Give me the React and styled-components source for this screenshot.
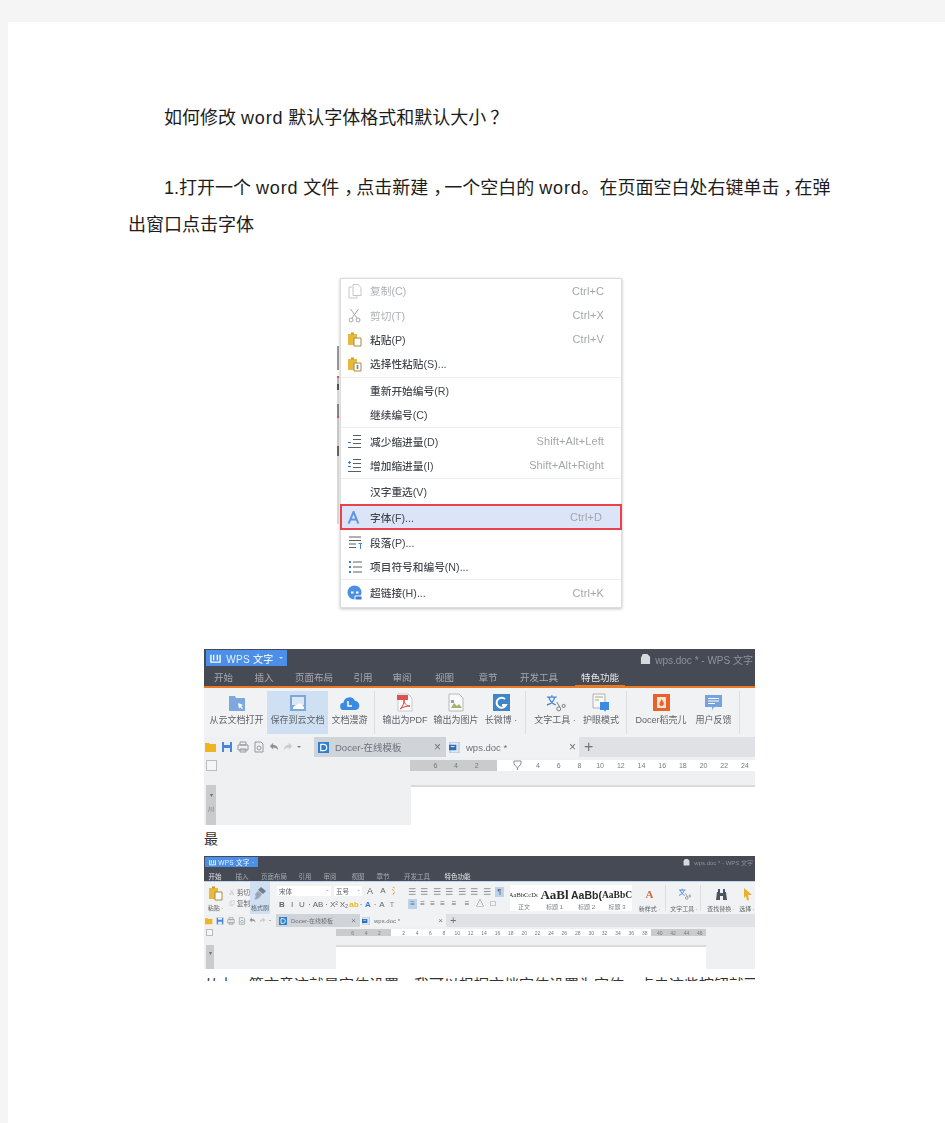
import React from "react";
import styled, { createGlobalStyle } from "styled-components";

const CJK = `"Liberation Sans", "Noto Sans CJK SC", sans-serif`;

const Global = createGlobalStyle`
  html, body { margin: 0; padding: 0; background: #f5f5f5; }
  * { box-sizing: border-box; }
`;

const Page = styled.main`
  margin: 22px 0 0 8px;
  min-height: 1101px;
  padding-top: 78px;
  background: #fff;
  color: #1c1c1c;
  font-family: ${CJK};
  overflow: hidden;
`;
const Para = styled.p`
  margin: 0 105px ${(p) => p.$after}px 120px;
  font-size: 18px;
  line-height: 37px;
  text-indent: 36px;
`;
const Latin = styled.span`
  letter-spacing: 0.8px;
`;
const Punct = styled.span`
  display: inline-block;
  text-indent: 0;
  width: ${(p) => p.$w || 16}px;
  padding-left: ${(p) => p.$shift ?? 5}px;
  white-space: nowrap;
`;

/* ---------- context menu ---------- */
const MenuWrap = styled.div`
  position: relative;
  width: 282px;
  margin: 0 0 41px 332px;
`;
const Menu = styled.div`
  padding-bottom: 2px;
  background: #fff;
  border: 1px solid #dcdcdc;
  box-shadow: 0 1px 3px rgba(0, 0, 0, 0.25);
  filter: blur(0.55px);
  font-size: 10.7px;
`;
const Row = styled.div`
  display: flex;
  align-items: center;
  height: 24.4px;
  padding: 0 17px 0 5px;
  color: ${(p) => (p.$off ? "#aeb0b2" : "#44484e")};
  font-weight: ${(p) => (p.$off ? 400 : 500)};
`;
const HotRow = styled(Row)`
  height: 26px;
  margin: 0 -1px;
  padding: 0 18px 0 4px;
  border: 2px solid #e8434c;
  background: #dce5f8;
`;
const RowIcon = styled.span`
  width: 24px;
  height: 17px;
  padding-left: 1px;
  display: flex;
  align-items: center;
  justify-content: flex-start;
`;
const RowLabel = styled.span`
  flex: 1;
  white-space: nowrap;
`;
const Keys = styled.span`
  color: #a4a6a9;
  font-size: 11px;
  font-weight: 400;
  letter-spacing: 0.1px;
`;
const Rule = styled.div`
  height: 1px;
  margin: 0.5px 0;
  background: #eeeeee;
`;
const Sliver = styled.div`
  position: absolute;
  left: -3px;
  top: 68px;
  width: 2px;
  height: 178px;
  filter: blur(0.6px);
  background: linear-gradient(#999 0 24px, #fff 24px 30px, #d55 30px 32px, #bbb 32px 38px, #555 38px 44px, #ddd 44px 58px, #888 58px 70px, #d55 70px 72px, #ccc 72px 100px, #666 100px 110px, #ddd 110px);
`;

const Ico = ({ children, w = 16, h = 16, box = "0 0 16 16" }) => (
  <svg width={w} height={h} viewBox={box} fill="none">{children}</svg>
);
const CopyIco = () => (
  <Ico><path d="M5 4H2v11h8v-2" stroke="#c4c6c8" /><path d="M6 1.500h5l3 3v8H6z" stroke="#c4c6c8" /></Ico>
);
const CutIco = () => (
  <Ico><circle cx="4" cy="13" r="2" stroke="#a5a7a9" /><circle cx="11" cy="13" r="2" stroke="#a5a7a9" /><path d="M3.500 2l6.500 9M11.500 2L5 11" stroke="#a5a7a9" /></Ico>
);
const PasteIco = ({ blue }) => (
  <Ico>
    <path d="M1 3h9v11H1z" fill="#e9b93c" />
    <path d="M4 1.500h3v2H4z" fill="#c99a2c" />
    <path d="M7 7h7v8H7z" fill="#fff" stroke="#a88a3e" />
    {blue && <path d="M10.500 9v4" stroke="#4a86d8" strokeWidth="1.600" />}
  </Ico>
);
const LinesIco = ({ arrow }) => (
  <Ico>
    <path d="M6 2.500h8M6 6.500h8M6 10.500h8M1 14.500h13" stroke="#5b6068" />
    <path d="M1 5.500h3M2.500 4v3" stroke={arrow ? "#3c78d8" : "#fff"} />
    <path d="M1 9.500h3" stroke="#3c78d8" />
  </Ico>
);
const AIco = () => (
  <Ico w={13} h={13}><path d="M2 15.500L8 1l6 14.500M4.500 10.500h7" stroke="#5f95e6" strokeWidth="2.400" /></Ico>
);
const ParaIco = () => (
  <Ico><path d="M2 3h12M2 6.500h12M2 10h7M2 13.500h7" stroke="#5b6068" /><path d="M11 9h4v1h-1v5h-1v-5h-1z" fill="#4a86d8" /></Ico>
);
const ListIco = () => (
  <Ico><path d="M6 3h9M6 8h9M6 13h9" stroke="#5b6068" /><path d="M2 2h2v2H2zM2 7h2v2H2zM2 12h2v2H2z" fill="#3c78d8" /></Ico>
);
const GlobeIco = () => (
  <Ico>
    <circle cx="7.500" cy="7.500" r="7" fill="#4d8fe0" />
    <path d="M4 6.500h2.500v2H4zM9 6.500h2.500v2H9z" fill="#fff" />
    <path d="M8 11h7v4H8z" fill="#3c78d8" stroke="#fff" />
  </Ico>
);

const menuRows = [
  { icon: <CopyIco />, label: "复制(C)", keys: "Ctrl+C", off: true },
  { icon: <CutIco />, label: "剪切(T)", keys: "Ctrl+X", off: true },
  { icon: <PasteIco />, label: "粘贴(P)", keys: "Ctrl+V" },
  { icon: <PasteIco blue />, label: "选择性粘贴(S)..." },
  "rule",
  { label: "重新开始编号(R)" },
  { label: "继续编号(C)" },
  "rule",
  { icon: <LinesIco />, label: "减少缩进量(D)", keys: "Shift+Alt+Left" },
  { icon: <LinesIco arrow />, label: "增加缩进量(I)", keys: "Shift+Alt+Right" },
  "rule",
  { label: "汉字重选(V)" },
  { hot: true, icon: <AIco />, label: "字体(F)...", keys: "Ctrl+D" },
  { icon: <ParaIco />, label: "段落(P)..." },
  { icon: <ListIco />, label: "项目符号和编号(N)..." },
  "rule",
  { icon: <GlobeIco />, label: "超链接(H)...", keys: "Ctrl+K" },
];

/* ---------- WPS screenshots shared ---------- */
const Column = styled.div`
  width: 551px;
  margin: 0 0 0 196px;
`;
const Shot = styled.div`
  height: ${(p) => p.$h}px;
  overflow: hidden;
  background: #eef0f1;
  filter: blur(${(p) => p.$blur}px);
`;
const TitleBar = styled.div`
  display: flex;
  align-items: flex-start;
  justify-content: space-between;
  height: ${(p) => p.$h}px;
  padding: 1px 2px 0 ${(p) => p.$pad}px;
  background: #454a54;
`;
const AppBtn = styled.div`
  display: flex;
  align-items: center;
  justify-content: space-between;
  width: ${(p) => p.$w}px;
  height: ${(p) => p.$h}px;
  padding: 0 4px;
  background: #4b8fe8;
  color: #e8f0fb;
  font-size: ${(p) => p.$fs}px;
  font-weight: 500;
  letter-spacing: 0.3px;
  white-space: nowrap;
`;
const DocTitle = styled.div`
  display: flex;
  align-items: center;
  gap: 4px;
  color: #8f939b;
  font-size: ${(p) => p.$fs}px;
  margin-top: ${(p) => p.$top}px;
`;
const TabBar = styled.div`
  display: flex;
  align-items: center;
  height: ${(p) => p.$h}px;
  background: #454a54;
  border-bottom: ${(p) => p.$line};
`;
const MenuTab = styled.div`
  width: ${(p) => p.$w}px;
  height: 100%;
  margin-left: ${(p) => p.$ml || 0}px;
  flex: none;
  display: flex;
  align-items: center;
  justify-content: center;
  color: ${(p) => (p.$on ? "#e6e8ea" : "#a6a9af")};
  font-size: ${(p) => p.$fs}px;
  white-space: nowrap;
  border-bottom: ${(p) => (p.$mark ? "1px solid #ea7a22" : "none")};
`;
const Flag = styled.span`
  width: 2px;
  height: 8px;
  margin-right: 1px;
  background: #ea7a22;
`;
const Ribbon = styled.div`
  display: flex;
  align-items: stretch;
  height: ${(p) => p.$h}px;
  padding: ${(p) => p.$pad};
  background: #f1f2f3;
`;
const RibBtn = styled.div`
  width: ${(p) => p.$w}px;
  margin-left: ${(p) => p.$ml || 0}px;
  flex: none;
  display: flex;
  flex-direction: column;
  align-items: center;
  padding-top: ${(p) => p.$top ?? 3}px;
  background: ${(p) => (p.$on ? "#cfe0f3" : "transparent")};
  color: #5f6369;
  font-size: ${(p) => p.$fs}px;
  line-height: ${(p) => p.$fs + 4}px;
  white-space: nowrap;
`;
const RibIcon = styled.div`
  height: ${(p) => p.$h}px;
  flex: none;
  margin-bottom: ${(p) => p.$gap}px;
  display: flex;
  align-items: center;
`;
const RibSep = styled.div`
  width: 1px;
  flex: none;
  margin: ${(p) => p.$m};
  background: #dcdee0;
`;
const Strip = styled.div`
  display: flex;
  align-items: center;
  height: ${(p) => p.$h}px;
  background: #dfe1e4;
`;
const Quick = styled.div`
  display: flex;
  align-items: center;
  gap: ${(p) => p.$gap}px;
  width: ${(p) => p.$w}px;
  height: 100%;
  padding-left: 1px;
  background: #eef0f1;
`;
const DocTab = styled.div`
  display: flex;
  align-items: center;
  gap: ${(p) => p.$gap}px;
  width: ${(p) => p.$w}px;
  height: 100%;
  padding: 0 ${(p) => p.$r}px 0 ${(p) => p.$l}px;
  background: ${(p) => (p.$on ? "#f1f2f3" : "#d0d3d8")};
  color: #6d7178;
  font-size: ${(p) => p.$fs}px;
  white-space: nowrap;
`;
const TabText = styled.span`
  flex: 1;
`;
const Close = styled.span`
  color: #70747a;
  font-size: ${(p) => p.$fs}px;
`;
const Plus = styled.span`
  margin-left: ${(p) => p.$l}px;
  color: #70747a;
  font-size: ${(p) => p.$fs}px;
  font-weight: 300;
  line-height: 1;
`;

/* rulers and workspace */
const RulerRow = styled.div`
  display: flex;
  align-items: flex-start;
  height: ${(p) => p.$h}px;
  padding-top: ${(p) => p.$top}px;
`;
const CornerBox = styled.div`
  width: ${(p) => p.$s}px;
  height: ${(p) => p.$s}px;
  flex: none;
  margin-left: 2px;
  margin-right: ${(p) => p.$r}px;
  background: #f4f5f5;
  border: 1px solid #b9bcc0;
`;
const RulerPart = styled.div`
  display: flex;
  align-items: center;
  flex: none;
  width: ${(p) => p.$w}px;
  height: ${(p) => p.$h}px;
  padding-left: ${(p) => p.$pad || 0}px;
  background: ${(p) => (p.$white ? "#fff" : "#c9cbcd")};
`;
const Tick = styled.span`
  width: ${(p) => p.$w}px;
  flex: none;
  text-align: center;
  color: #777a7e;
  font-size: ${(p) => p.$fs}px;
`;
const Work = styled.div`
  display: flex;
  align-items: flex-start;
  justify-content: space-between;
`;
const VRuler = styled.div`
  display: flex;
  flex-direction: column;
  align-items: center;
  gap: 6px;
  width: ${(p) => p.$w}px;
  height: ${(p) => p.$h}px;
  margin-left: 2px;
  padding-top: ${(p) => p.$top}px;
  background: #c9cbcd;
  color: #6d7075;
  font-size: 6px;
`;
const Sheet = styled.div`
  width: ${(p) => p.$w}px;
  height: ${(p) => p.$h}px;
  margin-right: ${(p) => p.$r || 0}px;
  background: #fff;
  border-top: 2px solid #d8dadc;
`;
const Side = styled.div`
  display: flex;
`;

/* second shot's ribbon parts */
const Stack = styled.div`
  display: flex;
  flex-direction: column;
  justify-content: space-between;
  flex: none;
  width: ${(p) => p.$w}px;
  margin-left: ${(p) => p.$l || 0}px;
  padding: ${(p) => p.$pad || "2px 0"};
`;
const Line = styled.div`
  display: flex;
  align-items: center;
  gap: ${(p) => p.$gap ?? 2}px;
  height: 11px;
  color: #62666c;
  font-size: 6.5px;
  white-space: nowrap;
`;
const Field = styled.div`
  display: flex;
  justify-content: space-between;
  align-items: center;
  flex: none;
  width: ${(p) => p.$w}px;
  height: 10px;
  padding: 0 2px;
  background: #fff;
  color: #5a5e64;
  font-size: 6.5px;
`;
const Glyph = styled.span`
  width: ${(p) => p.$w || 10}px;
  flex: none;
  text-align: center;
  color: ${(p) => p.$c || "#62666c"};
  font-size: ${(p) => p.$fs || 8}px;
  font-weight: ${(p) => (p.$b ? 700 : 400)};
  background: ${(p) => (p.$on ? "#bcd3ee" : "transparent")};
  line-height: 10px;
`;
const Gallery = styled.div`
  display: flex;
  flex: none;
  width: 122px;
  margin: 3px 0 3px 6px;
  background: #fff;
`;
const StyleCell = styled.div`
  width: ${(p) => p.$w}px;
  display: flex;
  flex-direction: column;
  align-items: center;
  justify-content: flex-end;
  overflow: hidden;
  color: #7a7d82;
  font-size: 6px;
`;
const Sample = styled.div`
  font-family: ${(p) => (p.$serif ? `"Liberation Serif", serif` : `"Liberation Sans", sans-serif`)};
  font-size: ${(p) => p.$fs}px;
  font-weight: ${(p) => (p.$b ? 700 : 400)};
  color: ${(p) => p.$c || "#2b2b2b"};
  line-height: 14px;
  white-space: nowrap;
`;
const Single = styled.div`
  font-family: "Noto Sans CJK SC", sans-serif;
  font-size: 14px;
  line-height: 18px;
  margin-top: 4px;
  margin-bottom: 9px;
  color: #333;
`;
const Clip = styled.div`
  height: 12px;
  padding-top: 8px;
  overflow: hidden;
  font-size: 15px;
  line-height: 15px;
  white-space: nowrap;
  color: #333;
`;

/* drawings */
const FolderBlue = () => (
  <Ico w={18} h={18} box="0 0 18 18">
    <path d="M1 2h6l1 2h9v13H1z" fill="#7ea8dc" />
    <path d="M10 9l5 2-2 1 2 2-1 1-2-2-1 2z" fill="#fff" />
  </Ico>
);
const SaveCloud = () => (
  <Ico w={18} h={18} box="0 0 18 18">
    <path d="M1 1h16v16H1z" fill="#7ea8dc" />
    <path d="M3 3h12v8H3z" fill="#dbe7f6" />
    <path d="M4 15c0-3 2-4 4-4 1-2 5-2 6 1 1 0 1 2 1 3z" fill="#fff" />
  </Ico>
);
const Cloud = () => (
  <Ico w={20} h={16} box="0 0 20 16">
    <path d="M4 15a3.600 3.600 0 0 1-.5-7.200A6 6 0 0 1 15 6a4.600 4.600 0 0 1 1 9z" fill="#3d8be0" />
    <path d="M8 6v5h4" stroke="#fff" strokeWidth="1.500" />
  </Ico>
);
const PdfIco = () => (
  <Ico w={16} h={19} box="0 0 16 19">
    <path d="M1 1h10l4 4v13H1z" fill="#fff" stroke="#c7c9cc" />
    <path d="M0 2h11v5H0z" fill="#d9534f" />
    <path d="M3 16c3-2 4-6 4-9 0 3 2 6 6 6-3 0-7 1-10 3z" stroke="#d9433f" fill="none" />
  </Ico>
);
const PicIco = () => (
  <Ico w={16} h={19} box="0 0 16 19">
    <path d="M1 1h10l4 4v13H1z" fill="#fafafa" stroke="#b5b8bb" />
    <path d="M3 15l3-5 3 3 2-2 3 4z" fill="#a6b26e" />
    <path d="M3 7h3v3H3z" fill="#8da3bd" />
  </Ico>
);
const WeiboIco = () => (
  <Ico w={17} h={17} box="0 0 17 17">
    <path d="M0 0h17v17H0z" fill="#3f86c8" />
    <path d="M12 5a5 5 0 1 0 1 6H9" stroke="#fff" strokeWidth="2" />
  </Ico>
);
const TransIco = ({ s = 18 }) => (
  <Ico w={s * 1.200} h={s} box="0 0 22 18">
    <path d="M3 3h10M8 1v2M5 3c1 4 4 7 7 8M11 3c-1 4-4 7-8 8" stroke="#4a86d8" strokeWidth="1.400" />
    <circle cx="15" cy="15" r="2" stroke="#777" />
    <circle cx="20" cy="12" r="1.600" stroke="#777" />
    <path d="M13 8l3 5" stroke="#777" />
  </Ico>
);
const EyeIco = () => (
  <Ico w={18} h={19} box="0 0 18 19">
    <path d="M1 1h12v14H1z" fill="#f8f8f8" stroke="#aeb1b4" />
    <path d="M3 4h8M3 7h4" stroke="#a6b26e" />
    <path d="M8 9h9v8h-3l-1 2-1-2H8z" fill="#3d8be0" />
  </Ico>
);
const DocerIco = () => (
  <Ico w={17} h={17} box="0 0 17 17">
    <path d="M0 0h17v17H0z" fill="#e8622a" />
    <path d="M4 3h9v11H4z" fill="#fbe6d5" />
    <path d="M8.500 5c2 3 3 4 2 6a2.400 2.400 0 0 1-4 0c-.5-2 1-3 2-6z" fill="#e8622a" />
  </Ico>
);
const FeedIco = () => (
  <Ico w={17} h={17} box="0 0 17 17">
    <path d="M0 1h17v12H9l-2 3v-3H0z" fill="#76a3dd" />
    <path d="M3 4.500h11M3 7h11M3 9.500h7" stroke="#fff" />
  </Ico>
);
const QFolder = ({ s }) => (
  <Ico w={s} h={s} box="0 0 12 12"><path d="M0 2h4l1 1h6v8H0z" fill="#eeb422" /></Ico>
);
const QSave = ({ s }) => (
  <Ico w={s} h={s} box="0 0 12 12"><path d="M1 1h10v10H1z" fill="#4a86d8" /><path d="M3 1h6v3H3zM3 7h6v4H3z" fill="#e6eefb" /></Ico>
);
const QPrint = ({ s }) => (
  <Ico w={s} h={s} box="0 0 12 12"><path d="M3 1h6v3H3zM1 4h10v5H1zM3 8h6v3H3z" stroke="#9699a0" /></Ico>
);
const QPrev = ({ s }) => (
  <Ico w={s} h={s} box="0 0 12 12"><path d="M2 1h6l2 2v8H2z" stroke="#9699a0" /><circle cx="6" cy="7" r="2" stroke="#9699a0" /></Ico>
);
const QUndo = ({ s, c, flip }) => (
  <Ico w={s} h={s} box="0 0 12 12">
    <path d={flip ? "M11 5L7 1v2.500C3 3.500 1 6 1 10c1.500-2.500 3-3.500 6-3.500V9z" : "M1 5l4-4v2.500c4 0 6 2.500 6 6.500-1.500-2.500-3-3.500-6-3.500V9z"} fill={c} />
  </Ico>
);
const DocerTabIco = ({ s }) => (
  <Ico w={s} h={s} box="0 0 12 12">
    <path d="M0 0h12v12H0z" fill="#2f7fd0" />
    <path d="M3 2.500h3a3.500 3.500 0 0 1 0 7H3z" stroke="#fff" strokeWidth="1.300" />
  </Ico>
);
const WpsDocIco = ({ s }) => (
  <Ico w={s} h={s} box="0 0 12 12">
    <path d="M1 0h10v12H1z" fill="#dfe9f7" stroke="#7e97b8" strokeWidth=".6" />
    <path d="M0 3h8v6H0z" fill="#2f6db8" />
    <path d="M2 5h4" stroke="#fff" />
  </Ico>
);
const Logo = ({ s }) => (
  <Ico w={s} h={s} box="0 0 12 12"><path d="M1 2v8h10V2M4 2v6M8 2v6" stroke="#fff" strokeWidth="1.500" /></Ico>
);
const Doc = ({ s }) => (
  <Ico w={s} h={s} box="0 0 12 12"><path d="M3 0h5l3 3v8H1V4z" fill="#d7d9dc" /></Ico>
);
const CutIco2 = () => (
  <Ico w={8} h={8}><circle cx="4" cy="13" r="2" stroke="#a5a7a9" /><circle cx="11" cy="13" r="2" stroke="#a5a7a9" /><path d="M3.500 2l6.500 9M11.500 2L5 11" stroke="#a5a7a9" /></Ico>
);
const CopyIco2 = () => (
  <Ico w={8} h={8}><path d="M5 4H2v11h8v-2M6 1.500h8v11H6z" stroke="#b5b7ba" /></Ico>
);
const BrushIco = () => (
  <Ico w={14} h={15} box="0 0 14 15"><path d="M8 1l5 4-3 3-5-4z" fill="#6f7f90" /><path d="M5 5l4 3-2 3c-2 2-4 3-6 2 2-1 2-3 1-5z" fill="#9aa6b2" /></Ico>
);
const BinoIco = () => (
  <Ico w={13} h={13} box="0 0 13 13"><path d="M1 12l1-8h3v8zM8 12V4h3l1 8zM5 5h3v3H5zM3 1h2v3H3zM8 1h2v3H8z" fill="#4b5560" /></Ico>
);
const PointerIco = () => (
  <Ico w={11} h={14} box="0 0 11 14"><path d="M2 1l8 7H6l1 5-2 .5L4 9l-2 2z" fill="#e8b12c" /></Ico>
);
const Pin = () => (
  <Ico w={9} h={11} box="0 0 9 11"><path d="M1 1h7v3L4.500 8 1 4zM4.500 8v2" stroke="#8a8d91" /></Ico>
);
const Sm = ({ c = "#8a8d91" }) => (
  <Ico w={9} h={9} box="0 0 9 9"><path d="M1 1.500h7M1 4.500h7M1 7.500h7" stroke={c} /></Ico>
);
const Wedge = styled.span`
  width: 0;
  height: 0;
  border: ${(p) => p.$s}px solid transparent;
  border-top-color: ${(p) => p.$c || "#cfe0f6"};
  border-bottom-width: 0;
`;
const Marker = styled.span`
  width: ${(p) => p.$w}px;
  flex: none;
  display: flex;
  justify-content: center;
`;

const tabs1 = [["开始", 39], ["插入", 42], ["页面布局", 58], ["引用", 40], ["审阅", 38], ["视图", 47], ["章节", 40], ["开发工具", 62]];
const tabs2 = [["开始", 22], ["插入", 32], ["页面布局", 32], ["引用", 30], ["审阅", 20], ["视图", 36], ["章节", 14], ["开发工具", 54]];
const ruler1Right = [4, 6, 8, 10, 12, 14, 16, 18, 20, 22, 24];
const ruler2 = [2, 4, 6, 8, 10, 12, 14, 16, 18, 20, 22, 24, 26, 28, 30, 32, 34, 36, 38];

const BigBtn = ({ w, icon, text, on }) => (
  <RibBtn $w={w} $fs={9} $top={2} $on={on}>
    <RibIcon $h={19} $gap={2}>{icon}</RibIcon>
    <span>{text}</span>
  </RibBtn>
);
const SmallBtn = ({ w, icon, text, ml, on, h = 14, gap = 3, top = 5 }) => (
  <RibBtn $w={w} $fs={6} $top={top} $ml={ml} $on={on}>
    <RibIcon $h={h} $gap={gap}>{icon}</RibIcon>
    <span>{text}</span>
  </RibBtn>
);

function WpsOne() {
  return (
    <Shot $h={176} $blur={0.6}>
      <TitleBar $h={19} $pad={2}>
        <AppBtn $w={81} $h={16} $fs={10}>
          <Logo s={11} />
          <span>WPS 文字</span>
          <Wedge $s={2} />
        </AppBtn>
        <DocTitle $fs={10} $top={2}><Doc s={11} /> wps.doc * - WPS 文字</DocTitle>
      </TitleBar>
      <TabBar $h={20} $line="2px solid #ea7a22">
        {tabs1.map(([t, w]) => <MenuTab key={t} $w={w} $fs={9.500}>{t}</MenuTab>)}
        <MenuTab $w={50} $ml={5} $fs={9.500} $on $mark>特色功能</MenuTab>
      </TabBar>
      <Ribbon $h={49} $pad="3px 0 3px 2px">
        <BigBtn w={61} icon={<FolderBlue />} text="从云文档打开" />
        <BigBtn w={61} icon={<SaveCloud />} text="保存到云文档" on />
        <BigBtn w={43} icon={<Cloud />} text="文档漫游" />
        <RibSep $m="0 4px 0 3px" />
        <BigBtn w={52} icon={<PdfIco />} text="输出为PDF" />
        <BigBtn w={50} icon={<PicIco />} text="输出为图片" />
        <BigBtn w={40} icon={<WeiboIco />} text="长微博 ·" />
        <RibSep $m="0 4px" />
        <BigBtn w={50} icon={<TransIco />} text="文字工具 ·" />
        <BigBtn w={42} icon={<EyeIco />} text="护眼模式" />
        <RibSep $m="0 4px" />
        <BigBtn w={60} icon={<DocerIco />} text="Docer稻壳儿" />
        <BigBtn w={45} icon={<FeedIco />} text="用户反馈" />
        <RibSep $m="0 0 0 3px" />
      </Ribbon>
      <Strip $h={20}>
        <Quick $w={110} $gap={4}>
          <QFolder s={12} /><QSave s={12} /><QPrint s={12} /><QPrev s={12} />
          <QUndo s={10} c="#8d9197" /><QUndo s={10} c="#c9cbce" flip />
          <Wedge $s={2} $c="#7a7d82" />
        </Quick>
        <DocTab $w={132} $l={4} $r={5} $gap={6} $fs={9.500}>
          <DocerTabIco s={11} /><TabText>Docer-在线模板</TabText><Close $fs={12}>×</Close>
        </DocTab>
        <DocTab $w={133} $on $l={3} $r={3} $gap={6} $fs={9.500}>
          <WpsDocIco s={11} /><TabText>wps.doc *</TabText><Close $fs={12}>×</Close>
        </DocTab>
        <Plus $l={5} $fs={16}>+</Plus>
      </Strip>
      <RulerRow $h={28} $top={3}>
        <CornerBox $s={11} $r={193} />
        <RulerPart $w={87} $h={11} $pad={15}>
          {[6, 4, 2].map((n, i) => <Tick key={i} $w={20.700} $fs={7}>{n}</Tick>)}
        </RulerPart>
        <RulerPart $w={258} $h={11} $white $pad={10}>
          <Marker $w={20.700}><Pin /></Marker>
          {ruler1Right.map((n) => <Tick key={n} $w={20.700} $fs={7}>{n}</Tick>)}
        </RulerPart>
      </RulerRow>
      <Work>
        <VRuler $w={10} $h={41} $top={6}><span>▾</span><span>川</span></VRuler>
        <Sheet $w={344} $h={41} />
      </Work>
    </Shot>
  );
}

function WpsTwo() {
  return (
    <Shot $h={113} $blur={0.65}>
      <TitleBar $h={14} $pad={1}>
        <AppBtn $w={53} $h={10} $fs={6.500}>
          <Logo s={7} />
          <span>WPS 文字</span>
          <Wedge $s={1.500} />
        </AppBtn>
        <DocTitle $fs={6} $top={1}><Doc s={7} /> wps.doc * - WPS 文字</DocTitle>
      </TitleBar>
      <TabBar $h={12} $line="1px solid #bcd3ee">
        {tabs2.map(([t, w], i) => <MenuTab key={t} $w={w} $fs={6.500} $on={i === 0}>{t}</MenuTab>)}
        <MenuTab $w={26} $fs={6.500} $on><Flag />特色功能</MenuTab>
      </TabBar>
      <Ribbon $h={32} $pad="0 0 0 1px">
        <SmallBtn w={21} icon={<PasteIco />} text="粘贴 ·" top={2} h={17} gap={2} />
        <Stack $w={24} $pad="5px 0 6px 3px">
          <Line><CutIco2 /><span>剪切</span></Line>
          <Line><CopyIco2 /><span>复制</span></Line>
        </Stack>
        <SmallBtn w={20} icon={<BrushIco />} text="格式刷" on top={3} h={16} gap={2} />
        <Stack $w={125} $l={7} $pad="3px 0 4px">
          <Line $gap={3}>
            <Field $w={54}><span>宋体</span><span>·</span></Field>
            <Field $w={28}><span>五号</span><span>·</span></Field>
            <Glyph $fs={9}>A</Glyph><Glyph $fs={8}>A</Glyph><Glyph $fs={9} $c="#d98a2b">氵</Glyph>
          </Line>
          <Line $gap={0}>
            <Glyph $b>B</Glyph><Glyph>I</Glyph><Glyph>U</Glyph><Glyph $w={5}>·</Glyph>
            <Glyph $w={12}>AB</Glyph><Glyph $w={5}>·</Glyph><Glyph>X²</Glyph><Glyph>X₂</Glyph>
            <Glyph $c="#e8b92c" $b>ab</Glyph><Glyph $w={4}>·</Glyph><Glyph $c="#3c78d8" $b>A</Glyph>
            <Glyph $w={4}>·</Glyph><Glyph>A</Glyph><Glyph $c="#8a8d91">T</Glyph>
          </Line>
        </Stack>
        <Stack $w={96} $l={6} $pad="4px 0 5px">
          <Line $gap={4}><Sm /><Sm /><Sm /><Sm /><Sm /><Sm /><Sm /><Glyph $on $w={9}>¶</Glyph></Line>
          <Line $gap={1}>
            <Glyph $on $w={9}>≡</Glyph><Glyph $w={9}>≡</Glyph><Glyph $w={9}>≡</Glyph><Glyph $w={9}>≡</Glyph><Glyph $w={12}>≡</Glyph>
            <Glyph $w={12}>≡</Glyph><Glyph $w={12} $c="#5a5e64">△</Glyph><Glyph $w={12}>□</Glyph>
          </Line>
        </Stack>
        <Gallery>
          <StyleCell $w={28}><Sample $fs={6.500} $serif>AaBbCcDd</Sample><span>正文</span></StyleCell>
          <StyleCell $w={33}><Sample $fs={13} $b $serif>AaBl</Sample><span>标题 1</span></StyleCell>
          <StyleCell $w={31}><Sample $fs={10.500} $b>AaBb(</Sample><span>标题 2</span></StyleCell>
          <StyleCell $w={30}><Sample $fs={9.500} $b $serif>AaBbC</Sample><span>标题 3</span></StyleCell>
        </Gallery>
        <SmallBtn w={25} ml={5} icon={<Sample $fs={11} $b $serif $c="#c9713a">A</Sample>} text="新样式 ·" />
        <RibSep $m="3px 3px" />
        <SmallBtn w={30} icon={<TransIco s={12} />} text="文字工具 ·" />
        <RibSep $m="3px 5px 3px 1px" />
        <SmallBtn w={30} icon={<BinoIco />} text="查找替换 ·" />
        <SmallBtn w={22} icon={<PointerIco />} text="选择 ·" />
      </Ribbon>
      <Strip $h={13}>
        <Quick $w={72} $gap={3}>
          <QFolder s={8} /><QSave s={8} /><QPrint s={8} /><QPrev s={8} />
          <QUndo s={7} c="#8d9197" /><QUndo s={7} c="#c9cbce" flip />
          <Wedge $s={1.500} $c="#7a7d82" />
        </Quick>
        <DocTab $w={84} $l={3} $r={4} $gap={4} $fs={6}>
          <DocerTabIco s={8} /><TabText>Docer-在线模板</TabText><Close $fs={8}>×</Close>
        </DocTab>
        <DocTab $w={86} $on $l={2} $r={3} $gap={4} $fs={6}>
          <WpsDocIco s={8} /><TabText>wps.doc *</TabText><Close $fs={8}>×</Close>
        </DocTab>
        <Plus $l={4} $fs={11}>+</Plus>
      </Strip>
      <RulerRow $h={18} $top={2}>
        <CornerBox $s={7} $r={123} />
        <RulerPart $w={55} $h={7} $pad={10}>
          {[6, 4, 2].map((n, i) => <Tick key={i} $w={13.400} $fs={5}>{n}</Tick>)}
        </RulerPart>
        <RulerPart $w={260} $h={7} $white $pad={6}>
          {ruler2.map((n) => <Tick key={n} $w={13.400} $fs={5}>{n}</Tick>)}
        </RulerPart>
        <RulerPart $w={55} $h={7} $pad={2}>
          {[40, 42, 44, 46].map((n) => <Tick key={n} $w={13.400} $fs={5}>{n}</Tick>)}
        </RulerPart>
      </RulerRow>
      <Work>
        <VRuler $w={8} $h={24} $top={4}><span>▾</span></VRuler>
        <Side><Sheet $w={370} $h={24} $r={49} /></Side>
      </Work>
    </Shot>
  );
}

export default function App() {
  return (
    <>
      <Global />
      <Page>
        <Para $after={33}>如何修改 <Latin>word</Latin> 默认字体格式和默认大小<Punct $w={18} $shift={4}>？</Punct></Para>
        <Para $after={33.500}>
          1.打开一个 <Latin>word</Latin> 文件<Punct $w={17}>，</Punct>点击新建<Punct>，</Punct>一个空白的 <Latin>word</Latin>。在页面空白处右键单击<Punct $w={15} $shift={4}>，</Punct>在弹出窗口点击字体
        </Para>
        <MenuWrap>
          <Sliver />
          <Menu>
            {menuRows.map((r, i) => {
              if (r === "rule") return <Rule key={i} />;
              const R = r.hot ? HotRow : Row;
              return (
                <R key={i} $off={r.off}>
                  <RowIcon>{r.icon}</RowIcon>
                  <RowLabel>{r.label}</RowLabel>
                  {r.keys && <Keys>{r.keys}</Keys>}
                </R>
              );
            })}
          </Menu>
        </MenuWrap>
        <Column>
          <WpsOne />
          <Single>最</Single>
          <WpsTwo />
          <Clip>从上一篇文章这就是字体设置，我可以根据文档字体设置为宋体，点击这些按钮就可以设置字体大小</Clip>
        </Column>
      </Page>
    </>
  );
}
